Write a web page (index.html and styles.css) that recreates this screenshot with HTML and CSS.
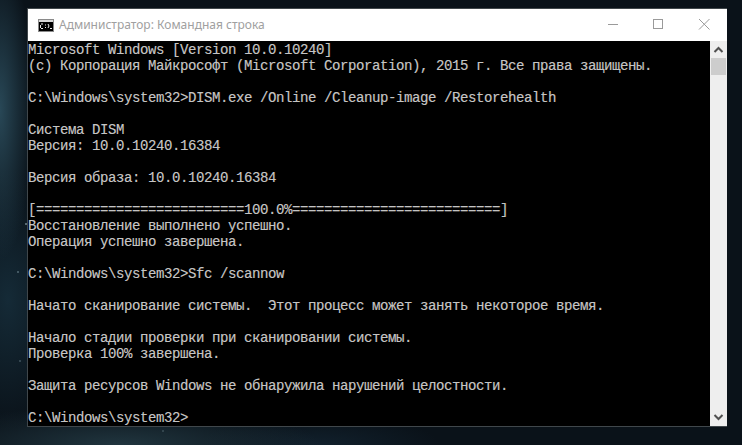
FILE: index.html
```html
<!DOCTYPE html>
<html lang="ru">
<head>
<meta charset="utf-8">
<title>Командная строка</title>
<link rel="stylesheet" href="styles.css">
</head>
<body>
<main class="window">
  <header class="titlebar">
    <svg class="app-icon" width="16" height="13" viewBox="0 0 16 13">
      <rect x="0" y="0" width="16" height="13" fill="#8a8a8a"/>
      <rect x="1" y="1" width="14" height="2" fill="#d8d8d8"/>
      <rect x="1" y="3" width="14" height="9" fill="#000"/>
      <path d="M3 5h2M2.500 6v3M3 9.500h2M7 6h1M7 8.500h1M10 5l1 2-1 2M12 9.500h2" stroke="#e8e8e8" fill="none"/>
    </svg>
    <span class="title">Администратор: Командная строка</span>
    <div class="controls">
      <svg width="46" height="32" viewBox="0 0 46 32"><path d="M19 15.500h10" stroke="#9a9a9a"/></svg>
      <svg width="46" height="32" viewBox="0 0 46 32"><rect x="18.500" y="10.500" width="9" height="9" fill="none" stroke="#9a9a9a"/></svg>
      <svg width="46" height="32" viewBox="0 0 46 32"><path d="M18 10l10.500 10.500M28.500 10L18 20.500" stroke="#9a9a9a" fill="none"/></svg>
    </div>
  </header>
  <div class="body">
    <pre class="console">Microsoft Windows [Version 10.0.10240]
(c) Корпорация Майкрософт (Microsoft Corporation), 2015 г. Все права защищены.

C:\Windows\system32&gt;DISM.exe /Online /Cleanup-image /Restorehealth

Система DISM
Версия: 10.0.10240.16384

Версия образа: 10.0.10240.16384

[==========================100.0%==========================]
Восстановление выполнено успешно.
Операция успешно завершена.

C:\Windows\system32&gt;Sfc /scannow

Начато сканирование системы.  Этот процесс может занять некоторое время.

Начало стадии проверки при сканировании системы.
Проверка 100% завершена.

Защита ресурсов Windows не обнаружила нарушений целостности.

C:\Windows\system32&gt;</pre>
    <div class="scrollbar">
      <svg class="arrow" width="17" height="17" viewBox="0 0 17 17"><path d="M4.500 11l4-4 4 4" fill="none" stroke="#505050" stroke-width="2"/></svg>
      <div class="thumb"></div>
      <div class="track"></div>
      <svg class="arrow" width="17" height="17" viewBox="0 0 17 17"><path d="M4.500 6l4 4 4-4" fill="none" stroke="#505050" stroke-width="2"/></svg>
    </div>
  </div>
</main>
</body>
</html>
```
FILE: styles.css
```css
html, body {
  margin: 0;
  height: 100%;
  overflow: hidden;
}
body {
  box-sizing: border-box;
  padding: 8px 15px 0 27px;
  background:
    radial-gradient(circle 1.5px at 26px 224px, rgba(190, 215, 225, .8), transparent),
    radial-gradient(circle 1.5px at 18px 272px, rgba(170, 200, 210, .6), transparent),
    radial-gradient(circle 1.5px at 20px 361px, rgba(150, 180, 190, .5), transparent),
    radial-gradient(circle 1.5px at 163px 431px, rgba(150, 180, 190, .4), transparent),
    radial-gradient(ellipse 34px 150px at 0 110px, rgba(48, 85, 102, .8), transparent),
    radial-gradient(ellipse 200px 40px at 120px 445px, rgba(38, 62, 72, .8), transparent),
    radial-gradient(ellipse 60px 130px at 8px 300px, rgba(22, 45, 58, .9), transparent),
    radial-gradient(ellipse 120px 30px at 320px 445px, rgba(20, 38, 52, .7), transparent),
    #0a1219;
}
.window {
  display: flex;
  flex-direction: column;
  height: 417px;
  background: #fff;
  border: solid #40474b;
  border-width: 1px 0 1px 1px;
}
.titlebar {
  display: flex;
  align-items: center;
  height: 32px;
  flex: none;
  background: #fff;
}
.app-icon {
  margin-left: 10px;
}
.title {
  margin-left: 5px;
  font: 12px/32px "Noto Sans", "Open Sans", sans-serif;
  color: #a0a0a0;
}
.controls {
  display: flex;
  margin-left: auto;
}
.body {
  display: flex;
  flex: 1;
  min-height: 0;
}
.console {
  flex: 1;
  margin: 0;
  padding-top: 1px;
  background: #000;
  color: #c4c4c4;
  font: 14px/16px "Liberation Mono", monospace;
  letter-spacing: -0.4px;
  text-shadow: .35px 0 0 rgba(190, 130, 80, .35), -.35px 0 0 rgba(90, 130, 190, .3);
  overflow: hidden;
}
.scrollbar {
  display: flex;
  flex-direction: column;
  width: 17px;
  background: #eeeeee;
}
.arrow { flex: none; }
.thumb {
  height: 17px;
  margin: 0 1px;
  background: #cdcdcd;
}
.track { flex: 1; }
```
